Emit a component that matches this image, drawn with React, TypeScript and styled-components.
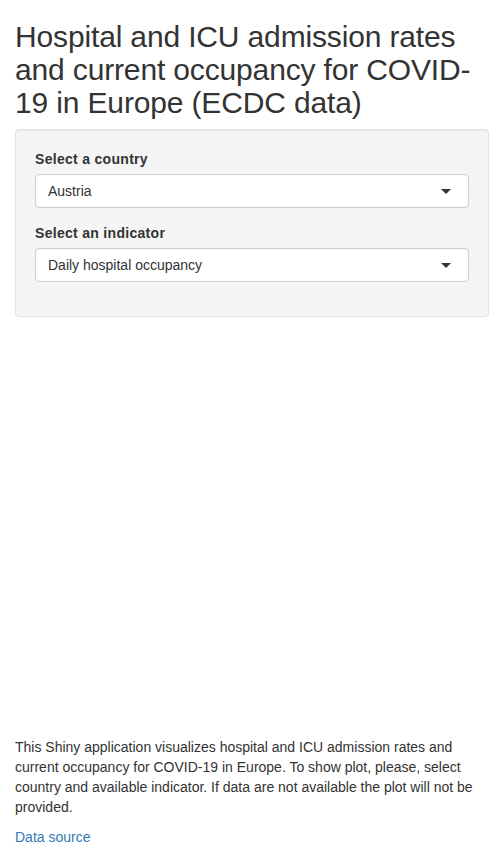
import React from "react"
import styled, { createGlobalStyle } from "styled-components"

const Color = {
    text: "#333333",
    well: "#f5f5f5",
    wellBorder: "#e3e3e3",
    inputBorder: "#cccccc",
    link: "#337ab7",
}

const GlobalStyle = createGlobalStyle`
    html, body {
        margin: 0;
        padding: 0;
        background: #fff;
    }
    body {
        font-family: "Liberation Sans", Arial, Helvetica, sans-serif;
        font-size: 14px;
        line-height: 1.42857143;
        color: ${Color.text};
    }
    * {
        box-sizing: border-box;
    }
`

type SelectProps = {
    label: string
    value: string
}

const SelectInput: React.FC<SelectProps> = ({ label, value }) => (
    <FormGroup>
        <Label>{label}</Label>
        <Control>
            <Value>{value}</Value>
            <Caret />
        </Control>
    </FormGroup>
)

const App: React.FC = () => (
    <>
        <GlobalStyle />
        <Container>
            <Title>
                Hospital and ICU admission rates and current occupancy for COVID-19 in Europe (ECDC data)
            </Title>
            <Well>
                <SelectInput label="Select a country" value="Austria" />
                <SelectInput label="Select an indicator" value="Daily hospital occupancy" />
            </Well>
            <PlotArea />
            <Paragraph>
                This Shiny application visualizes hospital and ICU admission rates and current occupancy
                for COVID-19 in Europe. To show plot, please, select country and available indicator. If
                data are not available the plot will not be provided.
            </Paragraph>
            <SourceLink href="#">Data source</SourceLink>
        </Container>
    </>
)

export default App

const Container = styled.div`
    padding: 0 15px;
`

const Title = styled.h2`
    font-size: 30px;
    font-weight: 500;
    line-height: 1.1;
    letter-spacing: -0.15px;
    margin: 20px 0 10px;
`

const Well = styled.div`
    background: ${Color.well};
    border: 1px solid ${Color.wellBorder};
    border-radius: 4px;
    box-shadow: inset 0 1px 1px rgba(0, 0, 0, 0.05);
    padding: 19px;
    margin-bottom: 20px;
`

const FormGroup = styled.div`
    margin-bottom: 15px;
`

const Label = styled.label`
    display: block;
    font-weight: 700;
    letter-spacing: 0.3px;
    margin-bottom: 5px;
`

const Control = styled.div`
    position: relative;
    height: 34px;
    background: #fff;
    border: 1px solid ${Color.inputBorder};
    border-radius: 4px;
    padding: 6px 12px;
    display: flex;
    align-items: center;
`

const Value = styled.span`
    line-height: 20px;
`

const Caret = styled.span`
    position: absolute;
    right: 17px;
    top: 50%;
    margin-top: -2px;
    width: 0;
    height: 0;
    border-style: solid;
    border-width: 5px 5px 0 5px;
    border-color: ${Color.text} transparent transparent transparent;
`

const PlotArea = styled.div`
    height: 400px;
`

const Paragraph = styled.p`
    margin: 0 0 10px;
`

const SourceLink = styled.a`
    color: ${Color.link};
    text-decoration: none;
`
